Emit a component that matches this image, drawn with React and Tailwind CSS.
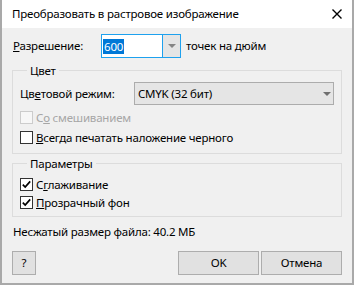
import React from 'react';

const CheckBox = ({ checked, disabled }) => (
  <span
    className={
      disabled
        ? 'mt-[3px] w-[13px] h-[13px] shrink-0 border border-[#cccccc] bg-[#f7f7f7]'
        : 'mt-[3px] w-[13px] h-[13px] shrink-0 border border-[#333333] bg-white flex items-center justify-center'
    }
  >
    {checked && (
      <svg width="11" height="11" viewBox="0 0 11 11">
        <path d="M1.8 5.6 L4.2 8 L9.2 2.4" fill="none" stroke="#000" strokeWidth="1.7" />
      </svg>
    )}
  </span>
);

const CheckRow = ({ h, checked, disabled, children }) => (
  <div className={`flex items-start ${h}`}>
    <CheckBox checked={checked} disabled={disabled} />
    <span className={disabled ? 'ml-[3px] leading-[19px] text-[#a6a6a6]' : 'ml-[3px] leading-[19px]'}>
      {children}
    </span>
  </div>
);

const Group = ({ title, children, className }) => (
  <fieldset className={`border border-[#dcdcdc] px-[7px] pb-[5px] ${className}`}>
    <legend className="ml-[7px] px-[3px] leading-[17px]">{title}</legend>
    {children}
  </fieldset>
);

const Button = ({ children, className }) => (
  <button className={`h-[24px] border border-[#adadad] bg-[#e1e1e1] flex items-center justify-center ${className}`}>
    {children}
  </button>
);

export default function App() {
  return (
    <div className="w-[354px] h-[287px] bg-white font-['Noto_Sans','Segoe_UI',sans-serif] text-[11.5px] tracking-[-0.2px] text-black">
      <div className="w-[354px] h-[285px] border-x-2 border-b-2 border-[#a9a9a9] flex flex-col">
        {/* title bar */}
        <div className="h-[28px] shrink-0 bg-white flex items-center justify-between pl-[10px] pr-[10px]">
          <span>Преобразовать в растровое изображение</span>
          <svg width="10" height="10" viewBox="0 0 10 10">
            <path d="M0.5 0.5 L9.5 9.5 M9.5 0.5 L0.5 9.5" stroke="#000" strokeWidth="1.4" />
          </svg>
        </div>

        <div className="flex-1 bg-[#f0f0f0] px-[10px] flex flex-col">
          {/* resolution */}
          <div className="mt-[6px] h-[24px] flex items-center">
            <span className="w-[89px] pl-[1px]"><u>Р</u>азрешение:</span>
            <div className="w-[80px] h-[24px] border border-[#1ea1ee] flex">
              <div className="w-[60px] bg-white flex items-center pl-[1px]">
                <span className="bg-[#0078d7] text-white leading-[15px] px-[1px]">600</span>
              </div>
              <div className="flex-1 border-l border-[#1ea1ee] bg-[#e5e5e5] flex items-center justify-center">
                <svg width="8" height="4" viewBox="0 0 8 4">
                  <path d="M0 0 H8 L4 4 Z" fill="#858585" />
                </svg>
              </div>
            </div>
            <span className="ml-[5px]">точек на дюйм</span>
          </div>

          {/* colour group */}
          <Group title="Цвет" className="mt-[4px]">
            <div className="mt-[3px] h-[23px] flex items-center">
              <span className="w-[114px]">Цв<u>е</u>товой режим:</span>
              <div className="flex-1 h-[23px] border border-[#acacac] bg-[#e5e5e5] flex items-center justify-between pl-[3px] pr-[2px]">
                <span>CMYK (32 бит)</span>
                <svg width="8" height="4" viewBox="0 0 8 4">
                  <path d="M0 0 H8 L4 4 Z" fill="#6f6f6f" />
                </svg>
              </div>
            </div>
            <div className="mt-[3px]">
              <CheckRow h="h-[20px]" disabled>С<u>о</u> смешиванием</CheckRow>
              <CheckRow h="h-[20px]"><u>В</u>сегда печатать наложение черного</CheckRow>
            </div>
          </Group>

          {/* params group */}
          <Group title="Параметры" className="mt-[1px]">
            <div className="mt-[3px]">
              <CheckRow h="h-[18px]" checked>С<u>г</u>лаживание</CheckRow>
              <CheckRow h="h-[18px]" checked><u>П</u>розрачный фон</CheckRow>
            </div>
          </Group>

          <div className="mt-[7px] leading-[16px] pl-[1px]">Несжатый размер файла: 40.2 МБ</div>

          <div className="mt-[11px] flex items-center">
            <Button className="w-[24px]">?</Button>
            <div className="flex-1" />
            <Button className="w-[81px]">OK</Button>
            <Button className="w-[81px] ml-[2px]">Отмена</Button>
          </div>
        </div>
      </div>
    </div>
  );
}
